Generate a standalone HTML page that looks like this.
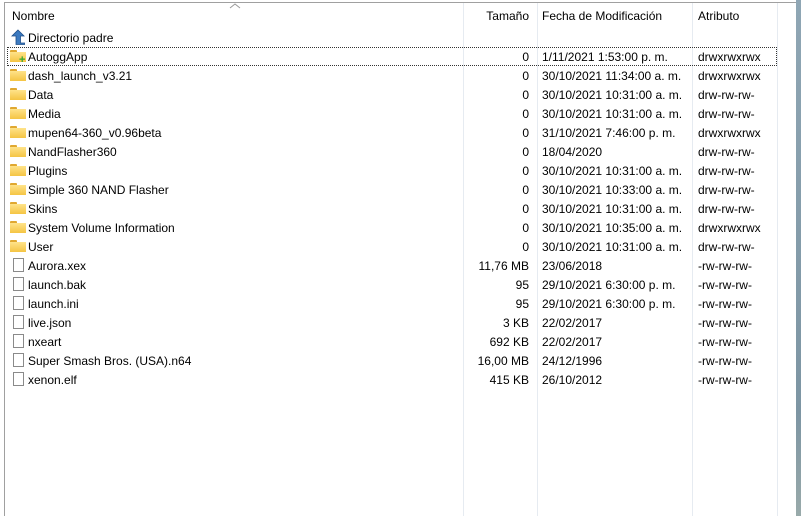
<!DOCTYPE html><html><head><style>
body{margin:0;width:801px;height:516px;overflow:hidden;background:#fff;font-family:"Liberation Sans",sans-serif;font-size:12px;color:#000;position:relative}
.top{position:absolute;left:4px;top:2px;width:792px;height:1px;background:#a0a0a0}
.left{position:absolute;left:4px;top:2px;width:1px;height:514px;background:#a0a0a0}
.strip{position:absolute;left:796px;top:0;width:5px;height:516px;background:linear-gradient(#8fa6b4,#7d95a3 80%,#9aa 100%)}
.vl{position:absolute;top:3px;width:1px;height:513px;background:#e6ebf1}
.t{position:absolute;white-space:nowrap;line-height:19px}
.r{text-align:right}
.fold{position:absolute;left:10px;width:16px;height:12px}
.fold:before{content:"";position:absolute;left:0;top:0;width:7px;height:3px;background:#e0a830;border-radius:1px 1px 0 0}
.fold:after{content:"";position:absolute;left:0;top:2px;width:16px;height:10px;background:linear-gradient(#ffe38a,#f5c443)}
.file{position:absolute;left:13px;width:11px;height:14px;border:1px solid #8a8a8a;background:#fff;box-sizing:border-box}
.focus{position:absolute;left:7px;top:47px;width:770px;height:19px;border:1px dotted #333;box-sizing:border-box}
</style></head><body>
<div class="top"></div><div class="left"></div><div class="strip"></div>
<div class="vl" style="left:463px"></div><div class="vl" style="left:537px"></div><div class="vl" style="left:692px"></div><div class="vl" style="left:777px"></div>
<svg style="position:absolute;left:229px;top:3px" width="12" height="6"><path d="M1 5 L6 1 L11 5" fill="none" stroke="#999"/></svg>
<div class="t" style="left:12px;top:7px">Nombre</div>
<div class="t r" style="left:463px;width:66px;top:7px">Tamaño</div>
<div class="t" style="left:542px;top:7px">Fecha de Modificación</div>
<div class="t" style="left:698px;top:7px">Atributo</div>
<svg style="position:absolute;left:11px;top:29px" width="14" height="16"><path d="M7 1 L13 7 H9.5 V14 H14 V15.5 H5 V7 H1 Z" fill="#3c7ac0" stroke="#1e4f8a" stroke-width="0.8"/></svg>
<div class="t" style="left:28px;top:29px">Directorio padre</div>
<div class="focus"></div>
<div id="rows"></div>
<script>
var d=[["f","AutoggApp","0","1/11/2021 1:53:00 p. m.","drwxrwxrwx"],["f","dash_launch_v3.21","0","30/10/2021 11:34:00 a. m.","drwxrwxrwx"],["f","Data","0","30/10/2021 10:31:00 a. m.","drw-rw-rw-"],["f","Media","0","30/10/2021 10:31:00 a. m.","drw-rw-rw-"],["f","mupen64-360_v0.96beta","0","31/10/2021 7:46:00 p. m.","drwxrwxrwx"],["f","NandFlasher360","0","18/04/2020","drw-rw-rw-"],["f","Plugins","0","30/10/2021 10:31:00 a. m.","drw-rw-rw-"],["f","Simple 360 NAND Flasher","0","30/10/2021 10:33:00 a. m.","drw-rw-rw-"],["f","Skins","0","30/10/2021 10:31:00 a. m.","drw-rw-rw-"],["f","System Volume Information","0","30/10/2021 10:35:00 a. m.","drwxrwxrwx"],["f","User","0","30/10/2021 10:31:00 a. m.","drw-rw-rw-"],["d","Aurora.xex","11,76 MB","23/06/2018","-rw-rw-rw-"],["d","launch.bak","95","29/10/2021 6:30:00 p. m.","-rw-rw-rw-"],["d","launch.ini","95","29/10/2021 6:30:00 p. m.","-rw-rw-rw-"],["d","live.json","3 KB","22/02/2017","-rw-rw-rw-"],["d","nxeart","692 KB","22/02/2017","-rw-rw-rw-"],["d","Super Smash Bros. (USA).n64","16,00 MB","24/12/1996","-rw-rw-rw-"],["d","xenon.elf","415 KB","26/10/2012","-rw-rw-rw-"]];
var h="";d.forEach(function(r,i){var y=47+19*i,ty=y+1;
h+=r[0]=="f"?'<div class="fold" style="top:'+(y+3)+'px"></div>':'<div class="file" style="top:'+(y+2)+'px"></div>';
h+='<div class="t" style="left:28px;top:'+ty+'px">'+r[1]+'</div><div class="t r" style="left:463px;width:66px;top:'+ty+'px">'+r[2]+'</div><div class="t" style="left:542px;top:'+ty+'px">'+r[3]+'</div><div class="t" style="left:698px;top:'+ty+'px">'+r[4]+'</div>';});
h+='<div style="position:absolute;left:19px;top:57px;width:7px;height:7px;color:#3a3;font-weight:bold;font-size:11px;line-height:7px">+</div>';
document.getElementById("rows").innerHTML=h;
</script>
</body></html>
